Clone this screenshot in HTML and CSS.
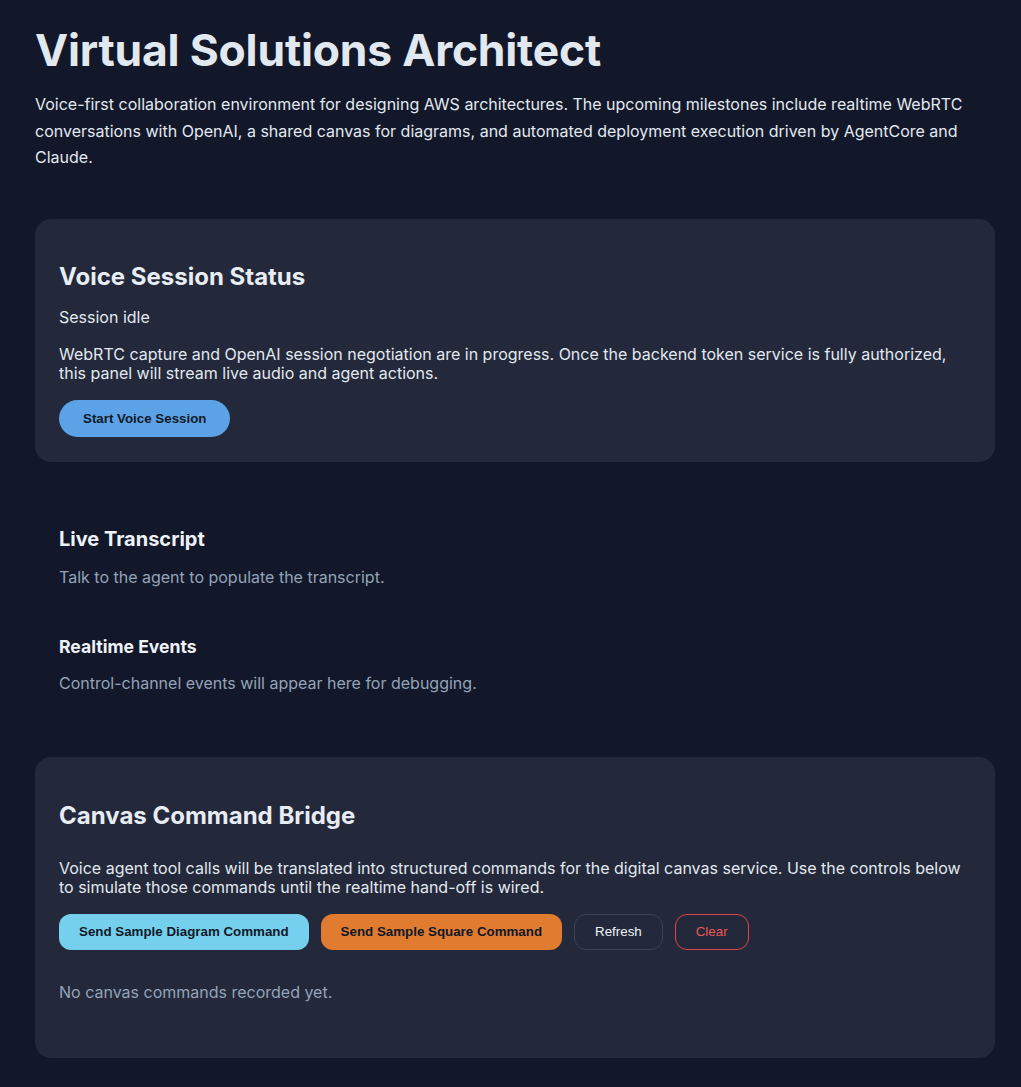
FILE: index.html
```html
<!DOCTYPE html>
<html lang="en">
<head>
<meta charset="utf-8">
<title>Virtual Solutions Architect</title>
<link rel="stylesheet" href="styles.css">
</head>
<body>
<main class="app">
  <header class="intro">
    <h1 class="title">Virtual Solutions Architect</h1>
    <p class="lead">Voice-first collaboration environment for designing AWS architectures. The upcoming milestones include realtime WebRTC conversations with OpenAI, a shared canvas for diagrams, and automated deployment execution driven by AgentCore and Claude.</p>
  </header>

  <section class="card card-voice">
    <h2 class="card-title">Voice Session Status</h2>
    <p class="status">Session idle</p>
    <p class="desc">WebRTC capture and OpenAI session negotiation are in progress. Once the backend token service is fully authorized, this panel will stream live audio and agent actions.</p>
    <button class="btn-pill" type="button">Start Voice Session</button>
  </section>

  <section class="plain">
    <h3 class="sub-title">Live Transcript</h3>
    <p class="muted">Talk to the agent to populate the transcript.</p>
    <h4 class="sub-title-sm">Realtime Events</h4>
    <p class="muted">Control-channel events will appear here for debugging.</p>
  </section>

  <section class="card card-canvas">
    <h2 class="card-title">Canvas Command Bridge</h2>
    <p class="desc desc-canvas">Voice agent tool calls will be translated into structured commands for the digital canvas service. Use the controls below to simulate those commands until the realtime hand-off is wired.</p>
    <div class="actions">
      <button class="btn btn-cyan" type="button">Send Sample Diagram Command</button>
      <button class="btn btn-orange" type="button">Send Sample Square Command</button>
      <button class="btn btn-ghost" type="button">Refresh</button>
      <button class="btn btn-danger" type="button">Clear</button>
    </div>
    <p class="muted empty">No canvas commands recorded yet.</p>
  </section>
</main>
</body>
</html>
```

FILE: styles.css
```css
* { box-sizing: border-box; }

html, body {
  margin: 0;
  background: #121829;
}

body {
  font-family: Inter, "Noto Sans", sans-serif;
  color: #e2e8f0;
}

.app {
  width: 960px;
  margin-left: 35px;
  padding: 22px 0 30px;
}

.title {
  margin: 0;
  font-size: 44.4px;
  line-height: 56px;
  font-weight: 700;
  color: #e2e8f0;
  letter-spacing: -0.2px;
}

.lead {
  margin: 13px 0 0;
  font-size: 16px;
  line-height: 26.5px;
  color: #e2e8f0;
}

.card {
  background: #23293a;
  border-radius: 16px;
  padding: 43px 24px 25px;
}

.card-voice {
  margin-top: 48px;
}

.card-title {
  margin: 0;
  font-size: 24px;
  line-height: 29px;
  font-weight: 700;
  color: #e8ecf3;
}

.status {
  margin: 17px 0 0;
  font-size: 16px;
  line-height: 19px;
}

.desc {
  margin: 18px 0 0;
  font-size: 16px;
  line-height: 19px;
}

.btn-pill {
  margin-top: 17px;
  height: 37px;
  padding: 0 24px;
  border: none;
  border-radius: 999px;
  background: #5ba3e6;
  color: #111827;
  font-family: "Liberation Sans", Arial, sans-serif;
  font-size: 13.33px;
  font-weight: 700;
  cursor: pointer;
}

.plain {
  padding: 65px 24px 0;
}

.sub-title {
  margin: 0;
  font-size: 20px;
  line-height: 24px;
  font-weight: 700;
  color: #eef2f7;
}

.muted {
  margin: 0;
  font-size: 16px;
  line-height: 19px;
  color: #94a3b8;
}

.sub-title + .muted {
  margin-top: 17px;
}

.sub-title-sm {
  margin: 49px 0 0;
  font-size: 17.6px;
  line-height: 21px;
  font-weight: 700;
  color: #eef2f7;
}

.sub-title-sm + .muted {
  margin-top: 17px;
}

.card-canvas {
  margin-top: 64px;
  padding-top: 44px;
  padding-bottom: 56px;
}

.desc-canvas {
  margin-top: 29px;
}

.actions {
  display: flex;
  gap: 12px;
  margin-top: 17px;
}

.btn {
  height: 36px;
  padding: 0 20px;
  border-radius: 12px;
  border: 1px solid transparent;
  font-family: "Liberation Sans", Arial, sans-serif;
  font-size: 13.33px;
  font-weight: 700;
  cursor: pointer;
}

.btn-cyan {
  background: #74d0ec;
  color: #111827;
  border: none;
}

.btn-orange {
  background: #e07b30;
  color: #111827;
  border: none;
}

.btn-ghost {
  background: transparent;
  border-color: #394253;
  color: #eef2f7;
  font-weight: 400;
}

.btn-danger {
  background: transparent;
  border-color: #d9484a;
  color: #e85858;
  font-weight: 400;
}

.empty {
  margin-top: 33px;
}
```
